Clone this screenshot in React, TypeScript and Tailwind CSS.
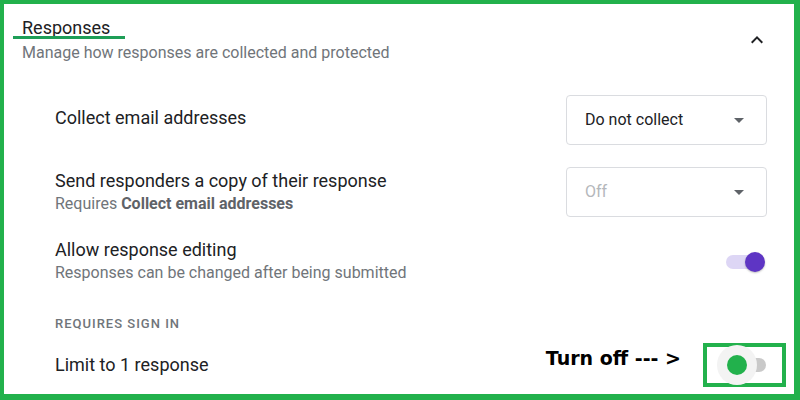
import React from "react";

function SelectBox({ value, muted }: { value: string; muted?: boolean }) {
  return (
    <div className="w-[201px] h-[50px] rounded-[4px] border border-[#dadce0] flex items-center justify-between pl-[18px] pr-[22px]">
      <span className={muted ? "text-[16px] text-[#b4b7bb]" : "text-[16px] text-[#202124]"}>{value}</span>
      <svg width="10" height="5" viewBox="0 0 10 5">
        <path d="M0 0 L10 0 L5 5 Z" fill="#5f6368" />
      </svg>
    </div>
  );
}

function Toggle({ on }: { on: boolean }) {
  return (
    <div className="relative w-[42px] h-[20px] flex items-center">
      <div className={on ? "ml-[3px] w-[36px] h-[14px] rounded-full bg-[#ddd6f5]" : "ml-[3px] w-[36px] h-[14px] rounded-full bg-[#c9c9c9]"} />
      {on ? (
        <div className="absolute right-0 top-0 w-[20px] h-[20px] rounded-full bg-[#5e35c4] shadow-[0_1px_2px_rgba(0,0,0,0.25)]" />
      ) : (
        <>
          <div className="absolute left-[-10px] top-[-10px] w-[40px] h-[40px] rounded-full bg-[#f3f3f3]" />
          <div className="absolute left-0 top-0 w-[20px] h-[20px] rounded-full bg-[#22b14c]" />
        </>
      )}
    </div>
  );
}

export default function App() {
  return (
    <div
      className="w-[800px] h-[400px] bg-white border-[#22b14c] border-t-4 border-l-4 border-r-[6px] border-b-[6px] overflow-hidden"
      style={{ fontFamily: "Roboto, 'Liberation Sans', sans-serif" }}
    >
      {/* header */}
      <div className="flex justify-between pl-[18px] pr-[25px] pt-[13px]">
        <div>
          <div className="relative inline-block text-[18px] leading-[22px] text-[#202124]">
            Responses
            <span className="absolute left-[-9px] top-[19px] w-[112px] h-[3px] bg-[#1e9e57]" />
          </div>
          <div className="mt-[2px] text-[16px] leading-[20px] text-[#70757a]">
            Manage how responses are collected and protected
          </div>
        </div>
        <svg className="mt-[11px]" width="24" height="24" viewBox="0 0 24 24">
          <path d="M7.41 15.41 12 10.83l4.59 4.58L18 14l-6-6-6 6z" fill="#202124" />
        </svg>
      </div>

      {/* settings */}
      <div className="pl-[51px] pr-[27px] mt-[32px]">
        <div className="flex items-center justify-between">
          <div className="text-[18px] leading-[22px] text-[#202124] -mt-[4px]">Collect email addresses</div>
          <SelectBox value="Do not collect" />
        </div>

        <div className="flex items-center justify-between mt-[22px]">
          <div>
            <div className="text-[18px] leading-[22px] text-[#202124]">Send responders a copy of their response</div>
            <div className="mt-[2px] text-[16px] leading-[20px] text-[#70757a]">
              Requires <span className="font-bold text-[#5f6368]">Collect email addresses</span>
            </div>
          </div>
          <SelectBox value="Off" muted />
        </div>

        <div className="flex items-center justify-between mt-[22px]">
          <div>
            <div className="text-[18px] leading-[22px] text-[#202124]">Allow response editing</div>
            <div className="mt-[2px] text-[16px] leading-[20px] text-[#70757a]">
              Responses can be changed after being submitted
            </div>
          </div>
          <div className="mr-[2px] mt-[1px]">
            <Toggle on />
          </div>
        </div>

        <div className="mt-[33px] text-[13px] leading-[16px] font-medium tracking-[1px] text-[#70757a]">
          REQUIRES SIGN IN
        </div>

        <div className="flex items-center mt-[11px] -mr-[19px]">
          <div className="flex-1 text-[18px] leading-[22px] text-[#202124]">Limit to 1 response</div>
          <div
            className="text-[19px] leading-[22px] font-bold text-black mr-[22px] -mt-[14px]"
            style={{ fontFamily: "'DejaVu Sans', 'Liberation Sans', sans-serif" }}
          >
            Turn off --- &gt;
          </div>
          <div className="w-[83px] h-[44px] border-4 border-[#22b14c] flex items-center pl-[20px]">
            <Toggle on={false} />
          </div>
        </div>
      </div>
    </div>
  );
}
